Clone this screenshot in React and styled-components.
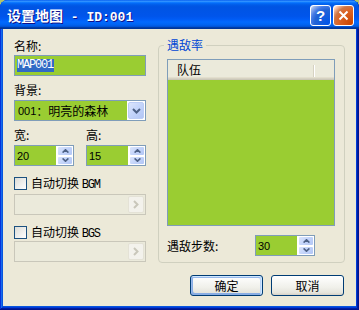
import React from "react";
import styled, { createGlobalStyle } from "styled-components";

const CJK = `"Noto Sans CJK SC", sans-serif`;
const SANS = `"Liberation Sans", "Noto Sans CJK SC", sans-serif`;
const MONO = `"Liberation Mono", "Noto Sans CJK SC", monospace`;
const GREEN = "#9acd32";

const GlobalStyle = createGlobalStyle`
  html, body {
    margin: 0;
    padding: 0;
    background: #b3c56b;
  }
  body {
    font-family: ${CJK};
    font-size: 12px;
    color: #000;
  }
`;

const Window = styled.div`
  width: 359px;
  height: 310px;
  box-sizing: border-box;
  display: flex;
  flex-direction: column;
  border-radius: 8px 8px 0 0;
  overflow: hidden;
  background: #0855dd;
  box-shadow: inset -1px -1px #00138c, inset 1px 1px #0831d9,
    inset -2px -2px #001ea0, inset 2px 2px #166aee, inset -3px -3px #003bda,
    inset 3px 3px #0855dd;
`;

const TitleBar = styled.div`
  flex: none;
  height: 29px;
  box-sizing: border-box;
  padding: 1px 5px 0 7px;
  display: flex;
  align-items: center;
  gap: 2px;
  background: linear-gradient(
    180deg,
    #0058ee 0%,
    #3593ff 4%,
    #288eff 6%,
    #127dff 8%,
    #036ffc 10%,
    #0262ee 14%,
    #0057e5 20%,
    #0054e3 24%,
    #0055eb 56%,
    #005bf5 66%,
    #026afe 76%,
    #0062ef 86%,
    #0052d6 92%,
    #0040ab 94%,
    #003092 100%
  );
`;

const Title = styled.div`
  flex: 1;
  margin-top: 2px;
  color: #fff;
  font-family: ${MONO};
  font-size: 13px;
  font-weight: bold;
  line-height: 16px;
  white-space: pre;
  text-shadow: 1px 1px #0f1089;
`;

const TitleCJK = styled.span`
  font-family: ${CJK};
  font-size: 14px;
`;

const TitleButton = styled.div`
  width: 21px;
  height: 21px;
  box-sizing: border-box;
  border: 1px solid #fff;
  border-radius: 3px;
  display: flex;
  align-items: center;
  justify-content: center;
  color: #fff;
  font-family: ${SANS};
  font-weight: bold;
  font-size: 15px;
  background: ${(p) =>
    p.$close
      ? "radial-gradient(circle at 90% 90%, #cc4600 0%, #dc6527 55%, #cd7546 70%, #ffccb2 90%, #fff 100%)"
      : "radial-gradient(circle at 90% 90%, #0054e9 0%, #2263d5 55%, #4479e4 70%, #a3bbec 90%, #fff 100%)"};
`;

const Body = styled.div`
  flex: 1;
  margin: 0 3px 4px;
  background: #ece9d8;
  display: flex;
  flex-direction: column;
  padding: 9px 11px 0;
`;

const TopRow = styled.div`
  display: flex;
  align-items: flex-start;
  gap: 12px;
`;

const LeftCol = styled.div`
  width: 132px;
  flex: none;
  display: flex;
  flex-direction: column;
  padding-top: 1px;
`;

const Label = styled.div`
  font-family: ${CJK};
  font-size: 12px;
  line-height: 14px;
  margin-top: ${(p) => p.$mt || 0}px;
  white-space: pre;
`;

const TextBox = styled.div`
  height: 21px;
  box-sizing: border-box;
  margin-top: ${(p) => p.$mt || 0}px;
  border: 1px solid #7f9db9;
  background: ${GREEN};
  padding: 0 2px;
  display: flex;
  align-items: center;
`;

const Selected = styled.span`
  background: #316ac5;
  color: #fff;
  font-family: ${MONO};
  font-size: 12px;
  letter-spacing: -1.2px;
  line-height: 13px;
  padding-right: 1px;
`;

const Combo = styled.div`
  height: 21px;
  box-sizing: border-box;
  margin-top: ${(p) => p.$mt || 0}px;
  border: 1px solid ${(p) => (p.$disabled ? "#c9c7ba" : "#7f9db9")};
  background: ${(p) => (p.$disabled ? "#ebeadb" : "#fff")};
  display: flex;
`;

const ComboText = styled.div`
  flex: 1;
  margin-right: 1px;
  background: ${GREEN};
  padding-left: 3px;
  display: flex;
  align-items: center;
  font-family: ${CJK};
  font-size: 12px;
  white-space: pre;
`;

const Num = styled.span`
  font-family: ${SANS};
  font-size: 11px;
`;

const ComboFill = styled.div`
  flex: 1;
`;

const DropButton = styled.div`
  width: 16px;
  margin: 1px 1px 1px 0;
  box-sizing: border-box;
  border-radius: 2px;
  display: flex;
  align-items: center;
  justify-content: center;
  border: 1px solid ${(p) => (p.$disabled ? "#e4e2d6" : "#bccdf5")};
  background: ${(p) =>
    p.$disabled
      ? "#f3f2ec"
      : "linear-gradient(135deg, #dbe5fc 0%, #c3d4fa 50%, #b2c6f5 100%)"};
`;

const SizeGrid = styled.div`
  margin-top: 7px;
  display: grid;
  grid-template-columns: 60px 60px;
  column-gap: 12px;
  row-gap: 3px;
`;

const SpinBox = styled.div`
  width: 60px;
  height: 21px;
  box-sizing: border-box;
  border: 1px solid #7f9db9;
  background: #fff;
  display: flex;
`;

const SpinText = styled.div`
  flex: 1;
  margin-right: 1px;
  background: ${GREEN};
  padding-left: 2px;
  display: flex;
  align-items: center;
  font-family: ${SANS};
  font-size: 11px;
`;

const SpinButtons = styled.div`
  width: 16px;
  display: flex;
  flex-direction: column;
`;

const SpinHalf = styled.div`
  flex: 1;
  box-sizing: border-box;
  border: 1px solid #fff;
  border-radius: 2px;
  display: flex;
  align-items: center;
  justify-content: center;
  background: linear-gradient(135deg, #dbe5fc 0%, #c3d4fa 50%, #b2c6f5 100%);
`;

const CheckRow = styled.div`
  margin-top: ${(p) => p.$mt || 0}px;
  height: 14px;
  display: flex;
  align-items: center;
  gap: 4px;
  font-size: 12px;
  white-space: pre;
`;

const CheckBox = styled.div`
  width: 13px;
  height: 13px;
  box-sizing: border-box;
  border: 1px solid #1c5180;
  background: linear-gradient(135deg, #dcdcd7 0%, #fff 100%);
`;

const Latin = styled.span`
  font-family: ${MONO};
  font-size: 12px;
  letter-spacing: -1.2px;
`;

const GroupBox = styled.fieldset`
  margin: 0;
  padding: 0 9px 0 8px;
  width: 187px;
  height: 225px;
  box-sizing: border-box;
  min-width: 0;
  border: 1px solid #d0d0bf;
  border-radius: 4px;
`;

const GroupLegend = styled.legend`
  margin-left: -3px;
  padding: 0 3px;
  color: #0046d5;
  font-size: 12px;
  line-height: 14px;
`;

const ListView = styled.div`
  margin-top: 7px;
  width: 168px;
  height: 167px;
  box-sizing: border-box;
  border: 1px solid #7f9db9;
  background: ${GREEN};
  display: flex;
  flex-direction: column;
`;

const ListHeader = styled.div`
  height: 20px;
  flex: none;
  display: flex;
  align-items: center;
  background: #ebeadb;
  box-shadow: inset 0 -1px #cbc7b8, inset 0 -2px #d6d2c2, inset 0 -3px #e2decd;
`;

const HeaderCell = styled.div`
  width: ${(p) => p.$w}px;
  box-sizing: border-box;
  padding: 0 0 1px 9px;
  display: flex;
  align-items: center;
  line-height: 14px;
`;

const HeaderText = styled.span`
  flex: 1;
`;

const HeaderDivider = styled.div`
  width: 1px;
  height: 12px;
  margin-top: 2px;
  background: #fff;
  box-shadow: -1px 0 #d6d2c2;
`;

const StepRow = styled.div`
  margin-top: 9px;
  display: flex;
  align-items: center;
`;

const StepLabel = styled.div`
  width: 88px;
  line-height: 14px;
`;

const ButtonRow = styled.div`
  margin-top: 12px;
  margin-right: 1px;
  display: flex;
  justify-content: flex-end;
  gap: 8px;
`;

const DialogButton = styled.button`
  width: 73px;
  height: 21px;
  padding: 0;
  box-sizing: border-box;
  border: 1px solid #003c74;
  border-radius: 3px;
  font-family: ${CJK};
  font-size: 12px;
  line-height: 14px;
  color: #000;
  background: linear-gradient(180deg, #fff 0%, #f0f0ea 60%, #e5e4dc 88%, #d6d0c5 100%);
  box-shadow: ${(p) =>
    p.$default
      ? "inset -1px 1px #cee7ff, inset 1px 2px #98b8ea, inset -2px 2px #bcd4f6, inset 1px -1px #89ade4, inset 2px -2px #89ade4"
      : "none"};
`;

const ChevronDown = () => (
  <svg width="9" height="6" viewBox="0 0 9 6">
    <path d="M1 1 L4.5 4.5 L8 1" fill="none" stroke="#4d6185" strokeWidth="2" />
  </svg>
);

const ChevronRight = () => (
  <svg width="6" height="9" viewBox="0 0 6 9">
    <path d="M1 1 L4.5 4.5 L1 8" fill="none" stroke="#c9c7ba" strokeWidth="2" />
  </svg>
);

const Arrow = ({ up }) => (
  <svg width="7" height="4" viewBox="0 0 7 4">
    <path
      d={up ? "M0.6 3.6 L3.5 0.8 L6.4 3.6" : "M0.6 0.4 L3.5 3.2 L6.4 0.4"}
      fill="none"
      stroke="#4d6185"
      strokeWidth="1.6"
    />
  </svg>
);

const CloseIcon = () => (
  <svg width="11" height="11" viewBox="0 0 11 11">
    <path d="M1.5 1.5 L9.5 9.5 M9.5 1.5 L1.5 9.5" stroke="#fff" strokeWidth="2" />
  </svg>
);

function Spinner({ value }) {
  return (
    <SpinBox>
      <SpinText>{value}</SpinText>
      <SpinButtons>
        <SpinHalf>
          <Arrow up />
        </SpinHalf>
        <SpinHalf>
          <Arrow />
        </SpinHalf>
      </SpinButtons>
    </SpinBox>
  );
}

export default function App() {
  return (
    <>
      <GlobalStyle />
      <Window>
        <TitleBar>
          <Title>
            <TitleCJK>设置地图</TitleCJK> - ID:001
          </Title>
          <TitleButton>?</TitleButton>
          <TitleButton $close>
            <CloseIcon />
          </TitleButton>
        </TitleBar>
        <Body>
          <TopRow>
            <LeftCol>
              <Label>名称:</Label>
              <TextBox $mt={2}>
                <Selected>MAP001</Selected>
              </TextBox>
              <Label $mt={7}>背景:</Label>
              <Combo $mt={3}>
                <ComboText>
                  <Num>001</Num>：明亮的森林
                </ComboText>
                <DropButton>
                  <ChevronDown />
                </DropButton>
              </Combo>
              <SizeGrid>
                <Label>宽:</Label>
                <Label>高:</Label>
                <Spinner value="20" />
                <Spinner value="15" />
              </SizeGrid>
              <CheckRow $mt={10}>
                <CheckBox />
                <span>
                  自动切换 <Latin>BGM</Latin>
                </span>
              </CheckRow>
              <Combo $mt={4} $disabled>
                <ComboFill />
                <DropButton $disabled>
                  <ChevronRight />
                </DropButton>
              </Combo>
              <CheckRow $mt={10}>
                <CheckBox />
                <span>
                  自动切换 <Latin>BGS</Latin>
                </span>
              </CheckRow>
              <Combo $mt={2} $disabled>
                <ComboFill />
                <DropButton $disabled>
                  <ChevronRight />
                </DropButton>
              </Combo>
            </LeftCol>
            <GroupBox>
              <GroupLegend>遇敌率</GroupLegend>
              <ListView>
                <ListHeader>
                  <HeaderCell $w={147}>
                    <HeaderText>队伍</HeaderText>
                    <HeaderDivider />
                  </HeaderCell>
                </ListHeader>
              </ListView>
              <StepRow>
                <StepLabel>遇敌步数:</StepLabel>
                <Spinner value="30" />
              </StepRow>
            </GroupBox>
          </TopRow>
          <ButtonRow>
            <DialogButton $default>确定</DialogButton>
            <DialogButton>取消</DialogButton>
          </ButtonRow>
        </Body>
      </Window>
    </>
  );
}
